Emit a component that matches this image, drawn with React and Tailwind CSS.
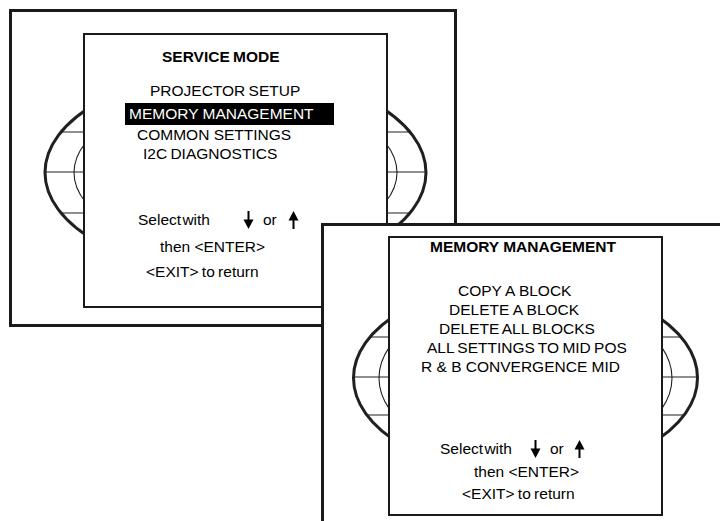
import React from "react";

const INK = "#231f20";

function ArrowDown() {
  return (
    <svg width="11" height="18" viewBox="0 0 11 18" className="block">
      <line x1="5.5" y1="0" x2="5.5" y2="10" stroke="#000" strokeWidth="2" />
      <polygon points="0.5,8.5 10.5,8.5 5.5,18" fill="#000" />
    </svg>
  );
}

function ArrowUp() {
  return (
    <svg width="11" height="18" viewBox="0 0 11 18" className="block">
      <polygon points="5.5,0 0.5,9.5 10.5,9.5" fill="#000" />
      <line x1="5.5" y1="8" x2="5.5" y2="18" stroke="#000" strokeWidth="2" />
    </svg>
  );
}

function Globe({ cx, cy, rx, ry, trx, tr, lines, id }) {
  return (
    <svg
      width="720"
      height="521"
      viewBox="0 0 720 521"
      className="absolute pointer-events-none"
    >
      <defs>
        <clipPath id={id}>
          <ellipse cx={cx} cy={cy} rx={rx} ry={ry} />
        </clipPath>
      </defs>
      <g clipPath={`url(#${id})`}>
        {lines.map((y) => (
          <line key={y} x1={cx - rx - 5} y1={y} x2={cx + rx + 5} y2={y} stroke={INK} strokeWidth="1.1" />
        ))}
      </g>
      <ellipse cx={cx} cy={cy} rx={trx} ry={tr} fill="none" stroke={INK} strokeWidth="1.1" />
      <ellipse cx={cx} cy={cy} rx={rx} ry={ry} fill="none" stroke={INK} strokeWidth="3" />
    </svg>
  );
}

export default function App() {
  return (
    <div className="relative w-[720px] h-[521px] overflow-hidden bg-white text-black font-['Liberation_Sans',Arial,sans-serif] text-[15.5px]">
      {/* Window 1 */}
      <div className="absolute left-[9px] top-[9px] w-[448px] h-[318px] border-[3px] border-[#1a1a1a]">
        <div className="absolute left-[-12px] top-[-12px]">
          <Globe id="g1" cx={235.5} cy={172.5} rx={190.5} ry={101} trx={161.5} tr={80} lines={[132, 172, 213]} />
        </div>
        <div className="relative z-10 ml-[71px] mt-[21px] w-[305px] h-[275px] border-2 border-[#1a1a1a] bg-white flex flex-col">
          <div className="mt-[12px] h-[20px] leading-[20px] pl-[77px] font-bold [word-spacing:-1px]">SERVICE MODE</div>
          <div className="mt-[14px] h-[20px] leading-[20px] pl-[65px] [word-spacing:-1px]">PROJECTOR SETUP</div>
          <div className="mt-[2px] h-[22px] pl-[40px]">
            <div className="w-[209px] h-[22px] leading-[22px] pl-[4px] bg-black text-white">MEMORY MANAGEMENT</div>
          </div>
          <div className="h-[19px] leading-[19px] pl-[52px]">COMMON SETTINGS</div>
          <div className="h-[19px] leading-[19px] pl-[58px] [word-spacing:-1px]">I2C DIAGNOSTICS</div>
          <div className="mt-[47px] h-[20px] pl-[53px] flex items-center">
            <span className="w-[105px] leading-[20px] [word-spacing:-3px]">Select with</span>
            <ArrowDown />
            <span className="ml-[9px] w-[25px] leading-[20px]">or</span>
            <ArrowUp />
          </div>
          <div className="mt-[7px] h-[20px] leading-[20px] pl-[75px]">then &lt;ENTER&gt;</div>
          <div className="mt-[5px] h-[20px] leading-[20px] pl-[61px] [word-spacing:-1px]">&lt;EXIT&gt; to return</div>
        </div>
      </div>

      {/* Window 2 */}
      <div className="absolute left-[321px] top-[223px] z-20 w-[410px] h-[310px] border-l-[3px] border-t-[3px] border-[#1a1a1a] bg-white">
        <div className="absolute left-[-324px] top-[-226px]">
          <Globe id="g2" cx={525.5} cy={378} rx={172} ry={96} trx={146.5} tr={84} lines={[337, 377, 415]} />
        </div>
        <div className="relative z-10 ml-[64px] mt-[10px] w-[275px] h-[280px] border-2 border-[#1a1a1a] bg-white flex flex-col">
          <div className="h-[18px] leading-[18px] pl-[40px] font-bold">MEMORY MANAGEMENT</div>
          <div className="mt-[25px] h-[19px] leading-[19px] pl-[68px]">COPY A BLOCK</div>
          <div className="h-[19px] leading-[19px] pl-[59px]">DELETE A BLOCK</div>
          <div className="h-[19px] leading-[19px] pl-[49px] [word-spacing:-1px]">DELETE ALL BLOCKS</div>
          <div className="h-[19px] leading-[19px] pl-[37px] [word-spacing:-1px]">ALL SETTINGS TO MID POS</div>
          <div className="h-[19px] leading-[19px] pl-[31px]">R &amp; B CONVERGENCE MID</div>
          <div className="mt-[63px] h-[20px] pl-[50px] flex items-center">
            <span className="w-[90px] leading-[20px] [word-spacing:-3px]">Select with</span>
            <ArrowDown />
            <span className="ml-[9px] w-[24px] leading-[20px]">or</span>
            <ArrowUp />
          </div>
          <div className="mt-[3px] h-[20px] leading-[20px] pl-[84px]">then &lt;ENTER&gt;</div>
          <div className="mt-[2px] h-[20px] leading-[20px] pl-[72px] [word-spacing:-1px]">&lt;EXIT&gt; to return</div>
        </div>
      </div>
    </div>
  );
}
